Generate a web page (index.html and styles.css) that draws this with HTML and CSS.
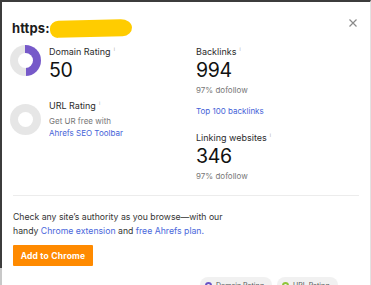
FILE: index.html
```html
<!DOCTYPE html>
<html>
<head>
<meta charset="utf-8">
<link rel="stylesheet" href="styles.css">
</head>
<body>
<div class="frame">
  <div class="edge"></div>
  <div class="card">
    <div class="head">
      <h1 class="url">https:<span class="blot"></span></h1>
      <svg class="close" width="8" height="8" viewBox="0 0 8 8"><path d="M0.5 0.5L7.5 7.5M7.5 0.5L0.5 7.5" stroke="#8a8a8a" stroke-width="1.2"/></svg>
    </div>
    <div class="cols">
      <div class="colL">
        <div class="metric">
          <div class="donut dr"></div>
          <div class="info">
            <div class="label">Domain Rating<sup>i</sup></div>
            <div class="num">50</div>
          </div>
        </div>
        <div class="metric ur-row">
          <div class="donut ur"></div>
          <div class="info">
            <div class="label">URL Rating<sup>i</sup></div>
            <div class="sub gap">Get UR free with</div>
            <a class="link">Ahrefs SEO Toolbar</a>
          </div>
        </div>
      </div>
      <div class="colR">
        <div class="label">Backlinks<sup>i</sup></div>
        <div class="num">994</div>
        <div class="sub">97% dofollow</div>
        <a class="link top">Top 100 backlinks</a>
        <div class="label">Linking websites<sup>i</sup></div>
        <div class="num">346</div>
        <div class="sub">97% dofollow</div>
      </div>
    </div>
    <hr class="divider">
    <p class="promo">Check any site’s authority as you browse—with our<br>handy <a class="link">Chrome extension</a> and <a class="link">free Ahrefs plan.</a></p>
    <button class="cta">Add to Chrome</button>
    <div class="pills">
      <span class="pill"><span class="dot purple"></span>Domain Rating</span>
      <span class="pill"><span class="dot green"></span>URL Rating</span>
    </div>
  </div>
</div>
</body>
</html>
```
FILE: styles.css
```css
* { box-sizing: border-box; }
html, body { margin: 0; padding: 0; background: #fff; }
body { font-family: Inter, "Noto Sans", sans-serif; color: #222; overflow: hidden; }
.frame { display: flex; height: 285px; border-top: 2px solid #3c3c3c; border-right: 1px solid #e2e2e2; }
.edge { width: 2px; flex: none; background: linear-gradient(to bottom, #3c3c3c 266px, #c8c8c8 266px); }
.card { flex: 1; padding: 0 11px 0 10px; }
.head { display: flex; align-items: center; justify-content: space-between; height: 37px; padding-top: 14px; }
.url { margin: 0; font-size: 13px; font-weight: 700; color: #1c1c1c; display: flex; align-items: center; letter-spacing: 0.1px; }
.blot { display: inline-block; width: 82px; height: 17px; margin-top: 2px; background: #ffcc00; border-radius: 9px 12px 10px 8px / 8px 9px 9px 8px; transform: rotate(-1.5deg); }
.close { margin-right: 2px; margin-top: -10px; }
.cols { display: grid; grid-template-columns: 184px 1fr; margin-top: 4px; }
.colL { display: flex; flex-direction: column; }
.colR { display: flex; flex-direction: column; align-items: flex-start; }
.metric { display: flex; gap: 8px; align-items: flex-start; }
.ur-row { margin-top: 15px; }
.donut { width: 31px; height: 31px; border-radius: 50%; flex: none; position: relative; margin-top: 2px; margin-left: -2px; }
.donut::after { content: ""; position: absolute; inset: 8px; background: #fff; border-radius: 50%; }
.donut.dr { background: conic-gradient(#7659c9 0 50%, #e6e6e6 50% 100%); }
.donut.ur { background: #e6e6e6; margin-top: 7px; }
.label { font-size: 9px; color: #2b2b2b; line-height: 12px; }
.label sup { font-size: 5px; color: #aaa; margin-left: 3px; vertical-align: 4px; }
.num { font-size: 19.5px; line-height: 24px; color: #111; letter-spacing: -0.3px; }
.sub { font-size: 8px; color: #777; line-height: 12px; margin-top: 2px; }
.sub.gap { margin-top: 3px; }
.link { color: #4563d8; font-size: 8px; line-height: 12px; text-decoration: none; }
.link.top { margin-top: 9px; margin-bottom: 12px; }
.info { display: flex; flex-direction: column; }
.divider { border: 0; border-top: 1px solid #ececec; margin: 13px 0 0 1px; }
.promo { margin: 14px 0 0 1px; font-size: 8.7px; line-height: 14px; color: #333; }
.promo .link { font-size: inherit; line-height: inherit; color: #4a68db; }
.cta { margin: 7px 0 0 1px; border: 0; background: #ff8a00; color: #fff; font-family: inherit; font-size: 8.5px; font-weight: 700; width: 80px; height: 21px; padding: 0; border-radius: 1px; letter-spacing: 0.2px; }
.pills { display: flex; justify-content: flex-end; gap: 5px; margin-top: 11px; padding-right: 21px; }
.pill { display: inline-flex; align-items: center; gap: 4px; background: #f1f1f1; border-radius: 8px; height: 16px; padding: 0 8px 0 5px; font-size: 7px; color: #555; white-space: nowrap; }
.pill:first-child { width: 72px; }
.pill:last-child { width: 61px; }
.dot { width: 7px; height: 7px; border-radius: 50%; flex: none; }
.dot.purple { border: 2px solid #6a55c5; }
.dot.green { border: 2px solid #8fc43a; }
```
